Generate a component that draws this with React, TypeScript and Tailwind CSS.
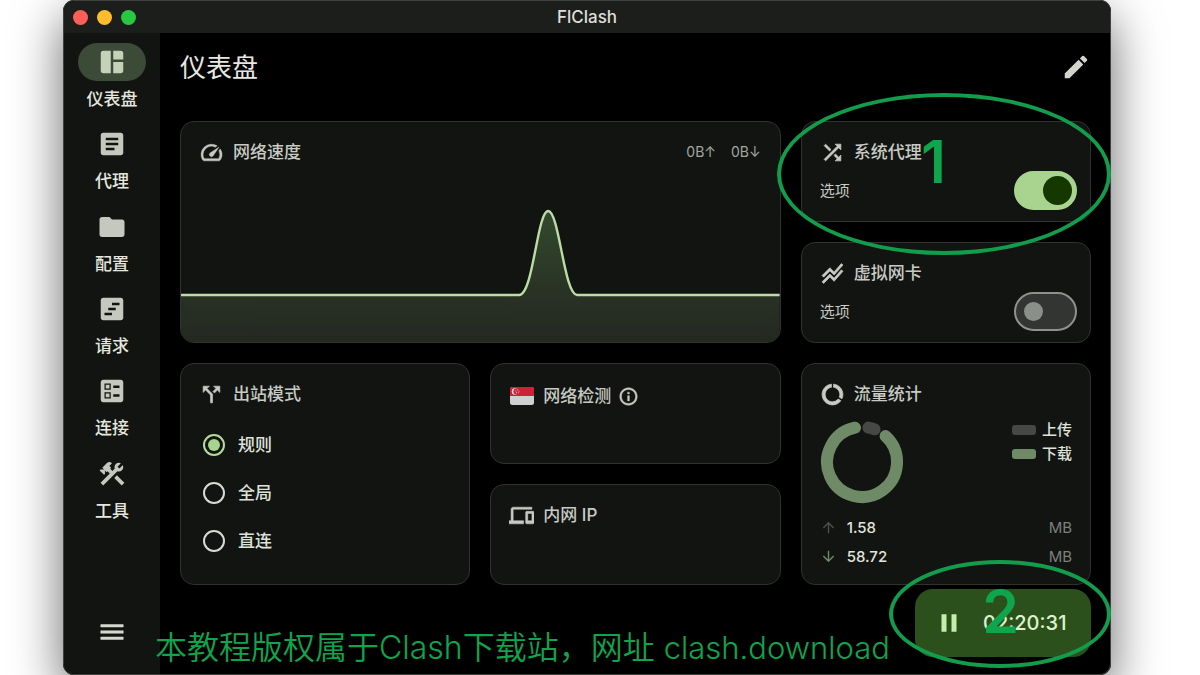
import React, { useState } from "react";
import { IconType } from "react-icons";
import {
    MdArrowDownward,
    MdArrowUpward,
    MdArticle,
    MdBallot,
    MdCallSplit,
    MdConstruction,
    MdDataUsage,
    MdDevices,
    MdEdit,
    MdFolder,
    MdInfoOutline,
    MdMenu,
    MdPause,
    MdShuffle,
    MdSpaceDashboard,
    MdSpeed,
    MdStackedLineChart,
    MdViewTimeline,
} from "react-icons/md";

const pages: { label: string; icon: IconType }[] = [
    { label: "仪表盘", icon: MdSpaceDashboard },
    { label: "代理", icon: MdArticle },
    { label: "配置", icon: MdFolder },
    { label: "请求", icon: MdViewTimeline },
    { label: "连接", icon: MdBallot },
    { label: "工具", icon: MdConstruction },
];

const modes = ["规则", "全局", "直连"];

const Card = ({ className = "", children }: { className?: string; children: React.ReactNode }) => (
    <section className={"flex flex-col overflow-hidden rounded-[14px] border border-[#30322f] bg-[#111411] " + className}>{children}</section>
);

// the icons carry an unfilled bounding path that must not pick up the stroke
const CardHeader = ({ icon, title, children }: { icon: React.ReactNode; title: string; children?: React.ReactNode }) => (
    <header className="mt-[18px] flex h-6 shrink-0 items-center pr-[19px] pl-[18px] text-[#c8cac3] [&_path[fill=none]]:stroke-none">
        <span className="flex w-[25px] shrink-0 justify-center">{icon}</span>
        <h2 className="ml-[9px] text-[17px] leading-6 font-medium">{title}</h2>
        {children}
    </header>
);

const Sidebar = () => {
    const [current, setCurrent] = useState("仪表盘");

    return (
        <aside className="flex w-24 shrink-0 flex-col items-center justify-between bg-[#111411] pt-[10px] pb-[27px]">
            <nav className="grid h-[494px] grid-rows-6">
                {pages.map(({ label, icon: PageIcon }) => (
                    <button key={label} className="flex cursor-pointer flex-col items-center" onClick={() => setCurrent(label)}>
                        <span className={"flex h-[38px] w-[68px] items-center justify-center rounded-full " + (label === current ? "bg-[#3c4b37] text-[#c3d2b8]" : "text-[#c5c8bf]")}>
                            <PageIcon size={30} />
                        </span>
                        <span className="mt-[6px] text-[17px] leading-6 font-medium text-[#e4e6df]">{label}</span>
                    </button>
                ))}
            </nav>

            <button className="cursor-pointer text-[#d6d8d0] [&_path[fill=none]]:stroke-none" aria-label="菜单">
                <MdMenu size={30} strokeWidth={0.4} />
            </button>
        </aside>
    );
};

const SpeedCard = () => (
    <Card className="col-span-2 row-span-2">
        <CardHeader icon={<MdSpeed size={25} strokeWidth={0.5} />} title="网络速度">
            <span className="ml-auto flex gap-[15px] text-[14px] leading-6 text-[#a3a59f]">
                <span>0B↑</span>
                <span>0B↓</span>
            </span>
        </CardHeader>

        <svg className="min-h-0 w-full flex-1" viewBox="0 0 600 178" preserveAspectRatio="none">
            <defs>
                <linearGradient id="speed" x1="0" y1="0" x2="0" y2="1">
                    <stop offset="0" stopColor="#34492e" />
                    <stop offset="0.6" stopColor="#293325" />
                    <stop offset="1" stopColor="#232821" />
                </linearGradient>
            </defs>
            <path d="M0 131H339C353 131 357 47 368 47S384 131 397 131H600V178H0Z" fill="url(#speed)" />
            <path d="M0 131H339C353 131 357 47 368 47S384 131 397 131H600" fill="none" stroke="#bcdca5" strokeWidth="2.4" />
        </svg>
    </Card>
);

const SwitchCard = ({ icon, title, defaultChecked = false }: { icon: React.ReactNode; title: string; defaultChecked?: boolean }) => (
    <Card>
        <CardHeader icon={icon} title={title} />
        <label className="mt-[7px] flex items-center justify-between pr-[13px] pl-[18px] text-[15px] leading-6 text-[#c8cac3]">
            选项
            <input
                type="checkbox"
                role="switch"
                defaultChecked={defaultChecked}
                className="flex h-[39px] w-[63px] cursor-pointer appearance-none items-center rounded-full border-2 border-[#8f928c] bg-[#323531] pl-2 before:size-[19px] before:rounded-full before:bg-[#8b8f89] checked:border-[#a8d490] checked:bg-[#a8d490] checked:pl-[27px] checked:before:size-[29px] checked:before:bg-[#153800]"
            />
        </label>
    </Card>
);

const ModeCard = () => {
    const [mode, setMode] = useState("规则");

    return (
        <Card className="row-span-2">
            <CardHeader icon={<MdCallSplit size={25} strokeWidth={0.6} />} title="出站模式" />
            <div className="mt-[15px] flex flex-col pl-[22px]">
                {modes.map((name) => (
                    <label key={name} className="flex h-12 cursor-pointer items-center gap-[13px] text-[17px] leading-6 font-medium text-[#dfe2da]">
                        <input
                            type="radio"
                            name="mode"
                            checked={mode === name}
                            onChange={() => setMode(name)}
                            className="flex size-[22px] appearance-none items-center justify-center rounded-full border-2 border-[#d8dad3] before:size-3 before:rounded-full checked:border-[#b3dc9c] checked:before:bg-[#a8d490]"
                        />
                        {name}
                    </label>
                ))}
            </div>
        </Card>
    );
};

const SingaporeFlag = () => (
    <svg width="24" height="18" viewBox="0 0 24 18">
        <rect width="24" height="18" rx="2.5" fill="#cfd0d2" />
        <path d="M0 9V2.500A2.500 2.500 0 0 1 2.500 0H21.500A2.500 2.500 0 0 1 24 2.500V9Z" fill="#cf2038" />
        <circle cx="5" cy="4.500" r="3.200" fill="#f1e4e6" />
        <circle cx="6.300" cy="4.500" r="2.900" fill="#cf2038" />
        <g fill="#f1e4e6">
            <circle cx="7.400" cy="2.700" r="0.500" />
            <circle cx="5.900" cy="3.900" r="0.500" />
            <circle cx="8.900" cy="3.900" r="0.500" />
            <circle cx="6.500" cy="5.700" r="0.500" />
            <circle cx="8.300" cy="5.700" r="0.500" />
        </g>
    </svg>
);

const TrafficCard = () => (
    <Card className="row-span-2">
        <CardHeader icon={<MdDataUsage size={25} strokeWidth={0.7} />} title="流量统计" />

        <div className="mt-3 flex items-end justify-between pr-[18px] pl-[18px]">
            <svg width="84" height="86" viewBox="-42 -44 84 86" fill="none" strokeWidth="12" strokeLinecap="round">
                <path d="M6.400 -34.400A35 35 0 0 1 12.600 -32.700" stroke="#464846" />
                <path d="M23.600 -25.900A35 35 0 1 1 -7 -34.300" stroke="#6f8a67" />
            </svg>

            <ul className="self-start text-[15px] leading-6 font-medium text-[#dfe2da]">
                <li className="flex items-center gap-[6px]">
                    <span className="h-[10px] w-6 rounded-[3px] bg-[#464846]" />
                    上传
                </li>
                <li className="flex items-center gap-[6px]">
                    <span className="h-[10px] w-6 rounded-[3px] bg-[#6f8a67]" />
                    下载
                </li>
            </ul>
        </div>

        <dl className="mt-[9px] pr-[18px] pl-[18px] text-[15px] leading-[29px]">
            <div className="flex items-center">
                <dt className="w-[27px]">
                    <MdArrowUpward size={17} className="text-[#4e504d]" aria-label="上传" />
                </dt>
                <dd className="font-medium text-[#e2e4dd]">1.58</dd>
                <dd className="ml-auto text-[#7e807b]">MB</dd>
            </div>
            <div className="flex items-center">
                <dt className="w-[27px]">
                    <MdArrowDownward size={17} className="text-[#6f8a67]" aria-label="下载" />
                </dt>
                <dd className="font-medium text-[#e2e4dd]">58.72</dd>
                <dd className="ml-auto text-[#7e807b]">MB</dd>
            </div>
        </dl>
    </Card>
);

// tutorial marks drawn over the app window
const Annotations = () => (
    <div className="pointer-events-none text-[#0fa54c]">
        <div className="absolute top-[93px] right-0 h-[162px] w-[334px] rounded-[50%] border-4 border-[#129c4c]" />
        <div className="absolute top-[126px] right-[165px] text-[59px] leading-[72px] font-semibold">1</div>
        <div className="absolute top-[560px] right-0 h-[108px] w-[222px] rounded-[50%] border-4 border-[#129c4c]" />
        <div className="absolute top-[576px] right-[92px] text-[59px] leading-[72px] font-semibold">2</div>
        <p className="absolute top-[628px] left-[92px] text-[32px] leading-10 font-[350] whitespace-nowrap">
            本教程版权属于Clash下载站，网址 <span className="text-[31px]">clash.download</span>
        </p>
    </div>
);

const App = () => (
    <div className="flex min-h-screen overflow-hidden bg-white pr-[89px] pl-[63px] font-['Inter','Noto_Sans_CJK_SC',sans-serif]" lang="zh-CN">
        <div className="relative flex flex-1 flex-col rounded-[11px] bg-black shadow-[0_18px_50px_rgba(0,0,0,0.6)]">
            <div className="flex flex-1 flex-col overflow-hidden rounded-[11px] border border-[#40423f]">
                <div className="grid h-8 shrink-0 grid-cols-3 items-center bg-[#1c1e1b] px-[9px]">
                    <div className="flex gap-[9px]">
                        <button className="size-[15px] rounded-full bg-[#ff5f57]" aria-label="关闭" />
                        <button className="size-[15px] rounded-full bg-[#febc2e]" aria-label="最小化" />
                        <button className="size-[15px] rounded-full bg-[#28c840]" aria-label="缩放" />
                    </div>
                    <h1 className="text-center text-[17px] leading-6 font-medium text-[#dcded8]">FlClash</h1>
                </div>

                <div className="flex flex-1">
                    <Sidebar />

                    <main className="flex flex-1 flex-col pr-[19px] pb-[17px] pl-5">
                        <div className="flex h-[88px] items-start justify-between pt-[17px]">
                            <h2 className="text-[26px] leading-9 text-[#e6e8e1]">仪表盘</h2>
                            <button className="cursor-pointer pt-0.5 text-[#d3d5cd]" aria-label="编辑">
                                <MdEdit size={30} />
                            </button>
                        </div>

                        <div className="grid auto-rows-[101px] grid-cols-3 gap-5">
                            <SpeedCard />
                            <SwitchCard icon={<MdShuffle size={25} strokeWidth={0.7} />} title="系统代理" defaultChecked />
                            <SwitchCard icon={<MdStackedLineChart size={25} strokeWidth={0.7} />} title="虚拟网卡" />
                            <ModeCard />
                            <Card className="pt-0.5">
                                <CardHeader icon={<SingaporeFlag />} title="网络检测">
                                    <MdInfoOutline size={21} strokeWidth={0.5} className="ml-[7px]" />
                                </CardHeader>
                            </Card>
                            <TrafficCard />
                            <Card>
                                <CardHeader icon={<MdDevices size={25} strokeWidth={0.5} />} title="内网 IP" />
                            </Card>
                        </div>

                        <button className="mt-1 flex h-[68px] w-44 cursor-pointer items-center gap-[19px] self-end rounded-[18px] bg-[#2c501b] pl-[19px] text-[20px] font-medium text-[#dcf3cc]">
                            <MdPause size={30} className="shrink-0 text-[#c3efaa]" />
                            02:20:31
                        </button>
                    </main>
                </div>
            </div>

            <Annotations />
        </div>
    </div>
);

export default App;
